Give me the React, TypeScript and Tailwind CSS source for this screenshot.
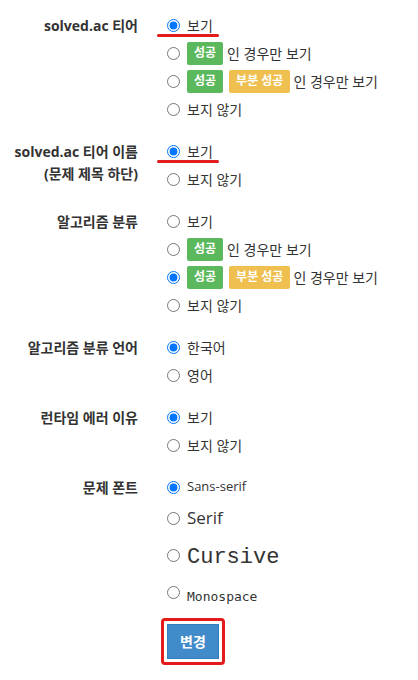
import React from "react";

const font = { fontFamily: '"Open Sans", "Noto Sans CJK KR", sans-serif' };

function Radio({ name, checked }: { name: string; checked?: boolean }) {
  return (
    <input
      type="radio"
      name={name}
      defaultChecked={checked}
      className="m-0 h-[13px] w-[13px] shrink-0 accent-[#0075ff]"
    />
  );
}

function Green() {
  return (
    <span className="inline-flex h-[23px] items-center rounded-[2px] bg-[#5cb85c] px-[7px] text-[12px] font-bold text-white">
      성공
    </span>
  );
}
function Yellow() {
  return (
    <span className="inline-flex h-[23px] items-center rounded-[2px] bg-[#efbf4f] px-[7px] text-[12px] font-bold text-white">
      부분 성공
    </span>
  );
}

function Opt({
  name,
  checked,
  children,
  underline,
}: {
  name: string;
  checked?: boolean;
  children: React.ReactNode;
  underline?: boolean;
}) {
  return (
    <label className="relative flex h-[28px] items-center gap-[7px]">
      <Radio name={name} checked={checked} />
      <span className="flex items-center gap-[6px]">{children}</span>
      {underline && (
        <span className="absolute left-[-10px] top-[23px] h-[3px] w-[62px] rounded-full bg-[#e31b1b]" />
      )}
    </label>
  );
}

function Section({
  label,
  children,
  first,
}: {
  label: React.ReactNode;
  children: React.ReactNode;
  first?: boolean;
}) {
  return (
    <div className={`grid grid-cols-[138px_1fr] gap-x-[29px] ${first ? "" : "mt-[14px]"}`}>
      <div className="pt-[4px] text-right text-[14px] font-bold leading-[22px] text-[#333]">{label}</div>
      <div className="flex flex-col">{children}</div>
    </div>
  );
}

export default function App() {
  return (
    <div className="min-h-[680px] w-[418px] bg-white pt-[11px] text-[14px] text-[#333]" style={font}>
      <Section label="solved.ac 티어" first>
        <Opt name="t" checked underline>보기</Opt>
        <Opt name="t">
          <Green />
          <span className="-ml-[2px]">인 경우만 보기</span>
        </Opt>
        <Opt name="t">
          <Green />
          <Yellow />
          <span className="-ml-[3px]">인 경우만 보기</span>
        </Opt>
        <Opt name="t">보지 않기</Opt>
      </Section>

      <Section
        label={
          <>
            solved.ac 티어 이름
            <br />
            (문제 제목 하단)
          </>
        }
      >
        <Opt name="n" checked underline>보기</Opt>
        <Opt name="n">보지 않기</Opt>
      </Section>

      <Section label="알고리즘 분류">
        <Opt name="a">보기</Opt>
        <Opt name="a">
          <Green />
          <span className="-ml-[2px]">인 경우만 보기</span>
        </Opt>
        <Opt name="a" checked>
          <Green />
          <Yellow />
          <span className="-ml-[3px]">인 경우만 보기</span>
        </Opt>
        <Opt name="a">보지 않기</Opt>
      </Section>

      <Section label="알고리즘 분류 언어">
        <Opt name="l" checked>한국어</Opt>
        <Opt name="l">영어</Opt>
      </Section>

      <Section label="런타임 에러 이유">
        <Opt name="r" checked>보기</Opt>
        <Opt name="r">보지 않기</Opt>
      </Section>

      <Section label="문제 폰트">
        <label className="flex h-[28px] items-center gap-[7px]">
          <Radio name="f" checked />
          <span className="text-[13px]" style={{ fontFamily: '"Open Sans", sans-serif' }}>Sans-serif</span>
        </label>
        <label className="flex h-[34px] items-start gap-[7px]">
          <span className="pt-[8px]"><Radio name="f" /></span>
          <span className="text-[17px] leading-[34px]" style={{ fontFamily: '"Open Sans", sans-serif' }}>Serif</span>
        </label>
        <label className="flex h-[44px] items-start gap-[7px]">
          <span className="pt-[11px]"><Radio name="f" /></span>
          <span className="pt-[2px] text-[22px] leading-[42px]" style={{ fontFamily: '"Liberation Mono", monospace' }}>Cursive</span>
        </label>
        <label className="flex h-[32px] items-start gap-[7px]">
          <span className="pt-[4px]"><Radio name="f" /></span>
          <span className="pt-[3px] text-[13px] leading-[29px]" style={{ fontFamily: '"DejaVu Sans Mono", monospace' }}>Monospace</span>
        </label>
        <div className="mt-[7px] -ml-[6px]">
          <div className="inline-block rounded-[4px] border-[3px] border-[#e31b1b] p-[3px]">
            <button className="flex h-[35px] w-[52px] items-center justify-center border border-[#357ebd] bg-[#428bca] text-[14px] font-bold text-white">
              변경
            </button>
          </div>
        </div>
      </Section>
    </div>
  );
}
